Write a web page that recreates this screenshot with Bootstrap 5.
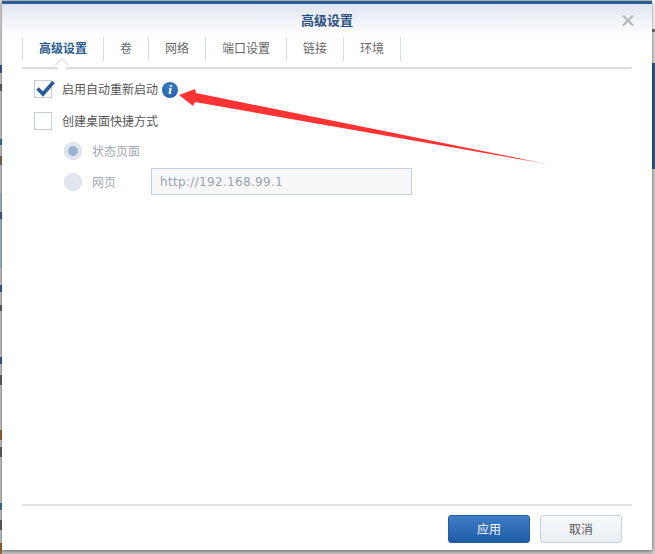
<!DOCTYPE html>
<html lang="zh-CN">

<head>
  <meta charset="UTF-8" />
  <title>高级设置</title>
  <meta name="viewport" content="width=device-width, initial-scale=1" />
  <link href="https://cdn.jsdelivr.net/npm/bootstrap@5.3.0/dist/css/bootstrap.min.css" rel="stylesheet" />

  <style>
    html, body {
      height: 554px;
      overflow: hidden;
    }

    body {
      font-family: "Noto Sans CJK SC", "Liberation Sans", sans-serif;
      font-size: 12px;
      color: #555;
      background-color: #c9c9c9;
      /* bits of the window behind the dialog */
      background-image:
        linear-gradient(#fff 0 29px, #777 29px 32px, #ddd 32px 63px, #2a5c96 63px 169px, #cfcfcf 169px),
        linear-gradient(#ddd 0 65px, #3d5f94 65px 73px, #ccc 73px 84px, #666 84px 91px, #ccc 91px 139px, #3f7796 139px 145px, #ccc 145px 156px, #8a6a60 156px 165px, #ccc 165px 193px, #a9bdd6 193px 212px, #3d5f94 212px 219px, #a9bdd6 219px 268px, #ccc 268px 285px, #3d5f94 285px 292px, #ccc 292px 305px, #666 305px 311px, #ccc 311px 357px, #3d5f94 357px 364px, #ccc 364px 375px, #666 375px 385px, #ccc 385px 430px, #9a6a30 430px 440px, #ccc 440px 447px, #666 447px 457px, #ccc 457px 503px, #3f7796 503px 510px, #ccc 510px 520px, #666 520px 530px, #ccc 530px 543px, #9a6a30 543px);
      background-size: 3px 100%, 2px 100%;
      background-position: right top, left top;
      background-repeat: no-repeat;
    }

    .dlg {
      width: 650px;
      height: 549px;
      margin: 1px 0 0 2px;
      background: #fff;
      border-top: 3px solid #2a5c96;
      box-shadow: 0 1px 4px rgba(0, 0, 0, .55);
    }

    .dlg-head {
      height: 33px;
      background: linear-gradient(#e0e6ef, #fff);
      color: #2b4f7e;
      font-size: 13px;
      font-weight: 700;
      line-height: 31px;
    }

    .dlg-close {
      right: 18px;
      top: 11px;
      line-height: 0;
    }

    .tab-strip {
      margin: 0 20px 0 20px;
      padding-bottom: 6px;
      border-bottom: 2px solid #dcdcdc;
      box-shadow: 0 3px 3px -2px rgba(0, 0, 0, .06);
    }

    .tab-item {
      height: 24px;
      line-height: 22px;
      padding: 0 16px;
      border-left: 1px solid #d5dde8;
      color: #666;
    }

    .tab-item:last-child {
      border-right: 1px solid #d5dde8;
    }

    .tab-item.on {
      color: #2b5a8e;
      font-weight: 700;
    }

    .tab-item.on::after {
      content: "";
      position: absolute;
      left: 34px;
      bottom: -9px;
      width: 10px;
      height: 10px;
      background: #fff;
      border-left: 1px solid #dcdcdc;
      border-top: 1px solid #dcdcdc;
      transform: rotate(45deg);
    }

    .dlg-body {
      padding: 11px 32px 0;
    }

    .chk-row2 {
      margin-top: 14px;
    }

    .opt-first {
      margin-top: 12px;
    }

    .opt-second {
      margin-top: 8px;
    }

    .opt-text {
      margin-left: 10px;
    }

    .chk-box {
      width: 18px;
      height: 18px;
      border: 1px solid #c3cedb;
      background: #fff;
      flex: none;
    }

    .chk-box svg {
      left: 1px;
      top: -3px;
    }

    .info-dot {
      width: 16px;
      height: 16px;
      border-radius: 50%;
      background: radial-gradient(circle at 50% 30%, #3f7fc6, #1f5ba5);
      color: #fff;
      font: italic 700 13px/16px "Liberation Serif", serif;
      text-align: center;
      margin: 2px 0 0 4px;
    }

    .opt-row {
      padding-left: 30px;
      color: #a0a8b4;
    }

    .radio-dot {
      width: 18px;
      height: 18px;
      border-radius: 50%;
      background: #e1e6ee;
      border: 1px solid #d8dee7;
      flex: none;
    }

    .radio-dot.on::after {
      content: "";
      width: 10px;
      height: 10px;
      border-radius: 50%;
      background: #9ab3d3;
    }

    .url-box,
    .url-box:disabled {
      width: 261px;
      height: 27px;
      margin-left: 35px;
      padding: 0 8px;
      border: 1px solid #c6d0dc;
      border-radius: 0;
      background: #f5f7f9;
      color: #9aa3af;
      font-family: "DejaVu Sans", sans-serif;
      font-size: 12px;
      letter-spacing: .32px;
    }

    .dlg-foot {
      margin: 0 20px;
      padding: 9px 10px 7px 0;
      border-top: 2px solid #e3e3e3;
      gap: 10px;
    }

    .act-btn {
      width: 82px;
      height: 28px;
      padding: 0;
      font-size: 12px;
      border-radius: 3px;
    }

    .act-apply {
      color: #fff;
      border: 1px solid #245a9e;
      background: linear-gradient(#3f7dc6, #1f5ca6);
    }

    .act-cancel {
      color: #555;
      border: 1px solid #c6d0dc;
      background: linear-gradient(#f7f9fb, #e9eef4);
    }

    .shot-arrow {
      left: 168px;
      top: 81px;
    }
  </style>
</head>

<body>

  <div class="dlg d-flex flex-column position-relative">
    <div class="dlg-head text-center position-relative">
      高级设置
      <span class="dlg-close position-absolute">
        <svg width="12" height="11" viewBox="0 0 12 11"><path d="M1 .5 11 10.5M11 .5 1 10.5" stroke="#b0b4b8" stroke-width="2" fill="none" /></svg>
      </span>
    </div>

    <div class="tab-strip d-flex">
      <div class="tab-item on position-relative">高级设置</div>
      <div class="tab-item">卷</div>
      <div class="tab-item">网络</div>
      <div class="tab-item">端口设置</div>
      <div class="tab-item">链接</div>
      <div class="tab-item">环境</div>
    </div>

    <div class="dlg-body flex-grow-1 d-flex flex-column">
      <div class="d-flex align-items-center">
        <span class="chk-box position-relative d-block">
          <svg class="position-relative d-block" width="20" height="19" viewBox="0 0 20 19"><path d="M1.5 10.5 7 16 17.5 4" stroke="#2a5c96" stroke-width="3.6" fill="none" /></svg>
        </span>
        <span class="opt-text">启用自动重新启动</span>
        <span class="info-dot">i</span>
      </div>
      <div class="d-flex align-items-center chk-row2">
        <span class="chk-box d-block"></span>
        <span class="opt-text">创建桌面快捷方式</span>
      </div>
      <div class="opt-row d-flex align-items-center opt-first">
        <span class="radio-dot on d-flex align-items-center justify-content-center"></span>
        <span class="opt-text">状态页面</span>
      </div>
      <div class="opt-row d-flex align-items-center opt-second">
        <span class="radio-dot d-block"></span>
        <span class="opt-text">网页</span>
        <input class="url-box form-control" type="text" value="http://192.168.99.1" disabled />
      </div>
    </div>

    <div class="dlg-foot d-flex justify-content-end">
      <button class="btn act-btn act-apply" type="button">应用</button>
      <button class="btn act-btn act-cancel" type="button">取消</button>
    </div>

    <!-- red arrow pasted on top of the screenshot -->
    <svg class="shot-arrow position-absolute" width="385" height="85" viewBox="170 85 385 85">
      <defs>
        <linearGradient id="arrowFade" x1="179" y1="95" x2="552" y2="165" gradientUnits="userSpaceOnUse">
          <stop offset="0" stop-color="#ff3333" />
          <stop offset=".9" stop-color="#ff3333" />
          <stop offset="1" stop-color="#ff3333" stop-opacity=".15" />
        </linearGradient>
      </defs>
      <polygon points="179,95 195,89 196,93 552,165 195,102 193,106" fill="url(#arrowFade)" />
    </svg>
  </div>

  <script src="https://cdn.jsdelivr.net/npm/bootstrap@5.3.0/dist/js/bootstrap.bundle.min.js"></script>
</body>

</html>
